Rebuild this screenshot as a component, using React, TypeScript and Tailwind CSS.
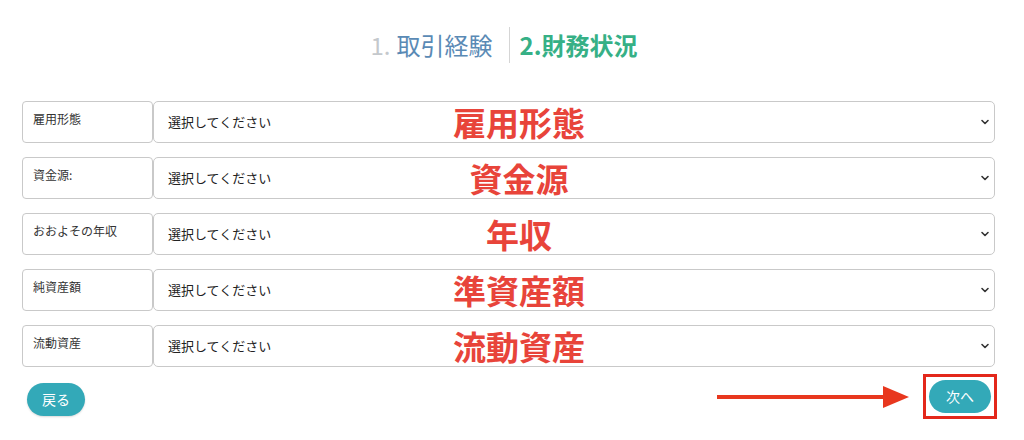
const fields = [
  { label: "雇用形態", note: "雇用形態" },
  { label: "資金源:", note: "資金源" },
  { label: "おおよその年収", note: "年収" },
  { label: "純資産額", note: "準資産額" },
  { label: "流動資産", note: "流動資産" },
];

function Chevron() {
  return (
    <svg width="10" height="10" viewBox="0 0 10 10" className="absolute right-[4px] top-1/2 -translate-y-1/2">
      <path d="M2 3.5 L5 6.5 L8 3.5" fill="none" stroke="#333" strokeWidth="1.6" strokeLinecap="round" strokeLinejoin="round" />
    </svg>
  );
}

function FieldRow({ label, note }: { label: string; note: string }) {
  return (
    <div className="relative flex h-[42px]">
      <div className="w-[131px] shrink-0 rounded-[4px] border border-[#c9c9c9] bg-white pl-[10px] pt-[9px] text-[12px] leading-[16px] text-[#333]">
        {label}
      </div>
      <div className="relative flex flex-1 items-center rounded-[5px] border border-[#c9c9c9] bg-white pl-[14px] text-[13px] text-[#222]">
        選択してください
        <Chevron />
      </div>
      <span className="pointer-events-none absolute left-[497px] top-1/2 -translate-x-1/2 -translate-y-1/2 whitespace-nowrap text-[33px] font-bold leading-none text-[#e8443a]">
        {note}
      </span>
    </div>
  );
}

export default function App() {
  return (
    <div
      className="h-[440px] w-[1024px] overflow-hidden bg-white"
      style={{ fontFamily: '"Noto Sans CJK JP", "Noto Sans", sans-serif' }}
    >
      <div className="flex h-[101px] items-start justify-center pt-[27px] pr-[16px]">
        <div className="flex h-[36px] items-center pr-[16px] text-[24px] text-[#5a8ab5]">
          <span className="mr-[6px] text-[#c4c8cc]">1.</span>取引経験
        </div>
        <div className="h-[36px] w-px bg-[#d5d5d5]" />
        <div className="flex h-[36px] items-center pl-[10px] text-[24px] font-bold text-[#36b086]">2.財務状況</div>
      </div>

      <div className="flex flex-col gap-[14px] pl-[22px] pr-[29px]">
        {fields.map((f) => (
          <FieldRow key={f.label} label={f.label} note={f.note} />
        ))}
      </div>

      <div className="mt-[7px] flex items-center justify-between pl-[27px] pr-[27px]">
        <button className="mt-[6px] h-[33px] w-[58px] rounded-full bg-[#33a9b8] text-[14px] text-white shadow-[0_1px_2px_rgba(0,0,0,0.15)]">
          戻る
        </button>
        <div className="flex items-center">
          <svg width="192" height="22" viewBox="0 0 192 22" className="mr-[14px]">
            <line x1="0" y1="11" x2="172" y2="11" stroke="#e8371e" strokeWidth="4" />
            <polygon points="166,0 192,11 166,22" fill="#e8371e" />
          </svg>
          <div className="border-[3px] border-[#e3281b] p-[3px]">
            <button className="block h-[33px] w-[62px] rounded-full bg-[#33a9b8] text-[14px] text-white">次へ</button>
          </div>
        </div>
      </div>
    </div>
  );
}
